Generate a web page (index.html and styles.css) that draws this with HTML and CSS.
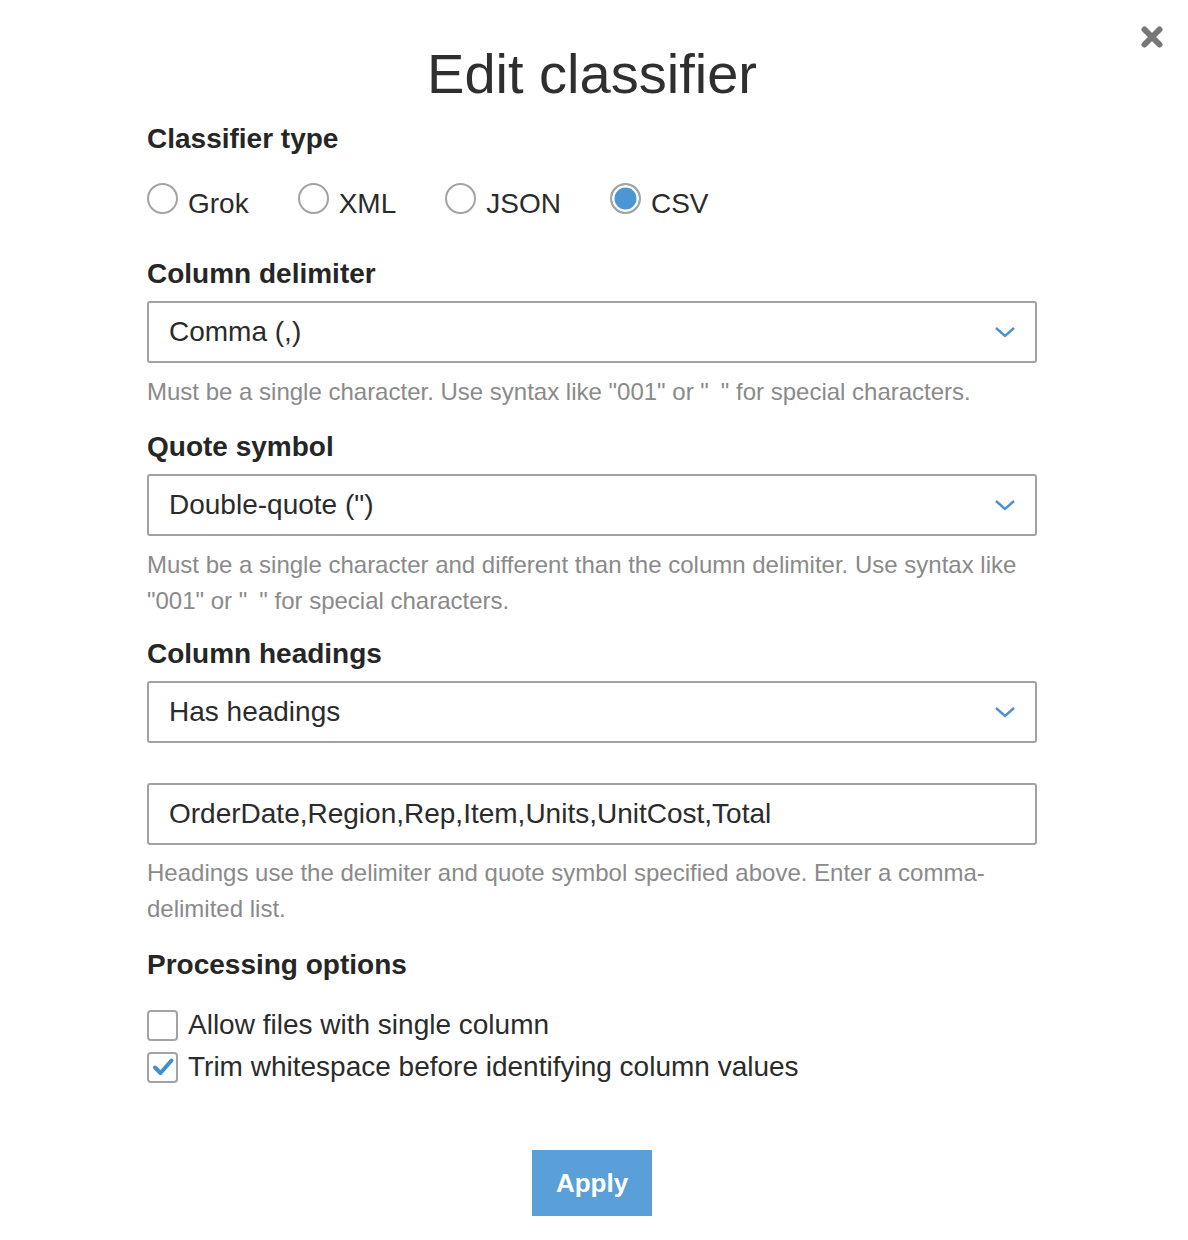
FILE: index.html
```html
<!DOCTYPE html>
<html lang="en">
<head>
<meta charset="utf-8">
<title>Edit classifier</title>
<link rel="stylesheet" href="styles.css">
</head>
<body>
<div class="page">
  <button class="close" type="button" aria-label="Close">
    <svg width="24" height="24" viewBox="0 0 24 24"><path d="M4.5 4.5 L19.5 19.5 M19.5 4.5 L4.5 19.5" stroke="#777" stroke-width="6" stroke-linecap="round" fill="none"/></svg>
  </button>

  <h1 class="title">Edit classifier</h1>

  <h2 class="label label-first">Classifier type</h2>
  <div class="radios">
    <div class="radio"><span class="circle"></span><span class="radio-text">Grok</span></div>
    <div class="radio"><span class="circle"></span><span class="radio-text">XML</span></div>
    <div class="radio"><span class="circle"></span><span class="radio-text">JSON</span></div>
    <div class="radio"><span class="circle checked"></span><span class="radio-text">CSV</span></div>
  </div>

  <h2 class="label label-after-radios">Column delimiter</h2>
  <div class="select">
    <span>Comma (,)</span>
    <svg class="chevron" width="22" height="14" viewBox="0 0 22 14"><path d="M2 3 L11 11 L20 3" stroke="#4b91d1" stroke-width="2.4" fill="none"/></svg>
  </div>
  <p class="hint">Must be a single character. Use syntax like "001" or "&ensp;" for special characters.</p>

  <h2 class="label">Quote symbol</h2>
  <div class="select">
    <span>Double-quote (")</span>
    <svg class="chevron" width="22" height="14" viewBox="0 0 22 14"><path d="M2 3 L11 11 L20 3" stroke="#4b91d1" stroke-width="2.4" fill="none"/></svg>
  </div>
  <p class="hint">Must be a single character and different than the column delimiter. Use syntax like "001" or "&ensp;" for special characters.</p>

  <h2 class="label label-tight">Column headings</h2>
  <div class="select">
    <span>Has headings</span>
    <svg class="chevron" width="22" height="14" viewBox="0 0 22 14"><path d="M2 3 L11 11 L20 3" stroke="#4b91d1" stroke-width="2.4" fill="none"/></svg>
  </div>
  <div class="input">OrderDate,Region,Rep,Item,Units,UnitCost,Total</div>
  <p class="hint hint-input">Headings use the delimiter and quote symbol specified above. Enter a comma-delimited list.</p>

  <h2 class="label label-options">Processing options</h2>
  <div class="checks">
    <div class="check"><span class="box"></span><span>Allow files with single column</span></div>
    <div class="check"><span class="box checked">
      <svg width="24" height="24" viewBox="0 0 24 24"><path d="M4 12.5 L9.5 18 L20.5 5.5" stroke="#3d8fd6" stroke-width="4" fill="none" stroke-linecap="round" stroke-linejoin="round"/></svg>
    </span><span>Trim whitespace before identifying column values</span></div>
  </div>

  <div class="actions">
    <button class="apply" type="button">Apply</button>
  </div>
</div>
</body>
</html>
```

FILE: styles.css
```css
* { box-sizing: border-box; }

html, body {
  margin: 0;
  padding: 0;
  background: #ffffff;
}

body {
  font-family: "Liberation Sans", Arial, Helvetica, sans-serif;
  color: #333333;
  font-size: 28px;
  line-height: 34px;
}

.page {
  position: relative;
  padding: 42px 151px 0 147px;
  min-height: 1240px;
}

.close {
  position: absolute;
  top: 25px;
  right: 24px;
  width: 24px;
  height: 24px;
  padding: 0;
  border: 0;
  background: transparent;
  cursor: pointer;
}

.close svg { display: block; }

.title {
  margin: 0;
  font-size: 56px;
  line-height: 64px;
  font-weight: normal;
  text-align: center;
  color: #2f2f2f;
}

.label {
  margin: 20px 0 0;
  font-size: 28px;
  line-height: 34px;
  font-weight: bold;
  color: #262626;
}

.label-first { margin-top: 16px; }
.label-after-radios { margin-top: 33px; }
.label-tight { margin-top: 18px; }
.label-options { margin-top: 21px; }

.radios {
  display: flex;
  align-items: center;
  gap: 49px;
  margin-top: 27px;
}

.radio {
  display: flex;
  align-items: center;
}

.circle {
  width: 31px;
  height: 31px;
  margin-right: 10px;
  margin-bottom: 10px;
  border: 2px solid #a3a3a3;
  border-radius: 50%;
  background: #fff;
  flex: none;
}

.circle.checked {
  background: #4d96d6;
  box-shadow: inset 0 0 0 2.5px #fff;
}

.radio-text { color: #2b2b2b; }

.select,
.input {
  display: flex;
  align-items: center;
  justify-content: space-between;
  height: 62px;
  margin-top: 10px;
  padding: 0 20px;
  border: 2px solid #a1a1a1;
  border-radius: 3px;
  color: #2b2b2b;
  background: #fff;
}

.chevron {
  display: block;
  margin-right: -1px;
}

.input {
  margin-top: 40px;
}

.hint {
  margin: 11px 0 0;
  font-size: 24px;
  line-height: 36px;
  color: #8a8a8a;
}

.hint-input { margin-top: 10px; }

.checks {
  display: flex;
  flex-direction: column;
  gap: 8px;
  margin-top: 26px;
}

.check {
  display: flex;
  align-items: center;
  color: #2b2b2b;
}

.box {
  width: 31px;
  height: 31px;
  margin-right: 10px;
  border: 2px solid #a3a3a3;
  border-radius: 4px;
  background: #fff;
  flex: none;
  display: flex;
  align-items: center;
  justify-content: center;
}

.box svg { display: block; }

.actions {
  display: flex;
  justify-content: center;
  margin-top: 66px;
}

.apply {
  width: 120px;
  height: 66px;
  border: 0;
  border-radius: 0;
  background: #5a9fd8;
  color: #ffffff;
  font-family: "Liberation Sans", Arial, Helvetica, sans-serif;
  font-size: 26px;
  font-weight: bold;
  cursor: pointer;
}
```
